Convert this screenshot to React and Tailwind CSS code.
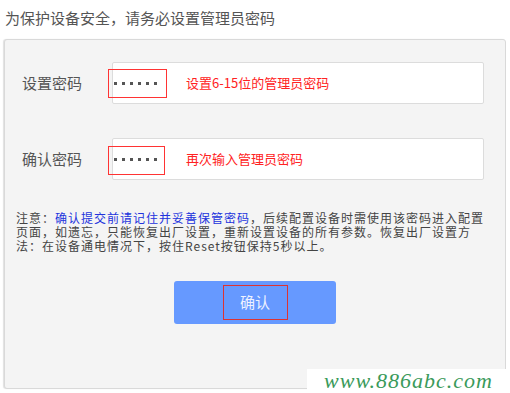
function Dots() {
  return (
    <div className="flex gap-[5px] ml-[1px]">
      {[0, 1, 2, 3, 4, 5].map((i) => (
        <span key={i} className="block w-[3px] h-[3px] bg-[#555]"></span>
      ))}
    </div>
  );
}

export default function App() {
  const font = { fontFamily: '"Noto Sans CJK SC", "Liberation Sans", sans-serif' };
  return (
    <div className="relative w-[510px] h-[393px] bg-white overflow-hidden" style={font}>
      <div className="pl-[5px] pt-[7px] h-[39px] text-[15px] leading-[22px] text-[#555]">为保护设备安全，请务必设置管理员密码</div>
      <div className="ml-[4px] w-[502px] h-[350px] bg-[#f4f4f4] border border-[#d9d9d9] rounded-[3px] shadow-[-1px_0_1px_#e0e0e0]">
        <div className="flex items-center h-[42px] mt-[22px]">
          <div className="w-[107px] pl-[17px] text-[15px] text-[#555]">设置密码</div>
          <div className="relative flex items-center w-[372px] h-[42px] bg-white border border-[#dcdcdc] rounded-[2px]">
            <div className="absolute left-[-5px] top-[6px] w-[59px] h-[29px] border border-[#ff3333]"></div>
            <Dots />
            <span className="ml-[29px] text-[13px] text-[#ff2222]">设置6-15位的管理员密码</span>
          </div>
        </div>
        <div className="flex items-center h-[42px] mt-[34px]">
          <div className="w-[107px] pl-[17px] text-[15px] text-[#555]">确认密码</div>
          <div className="relative flex items-center w-[372px] h-[42px] bg-white border border-[#dcdcdc] rounded-[2px]">
            <div className="absolute left-[-5px] top-[7px] w-[57px] h-[29px] border border-[#ff3333]"></div>
            <Dots />
            <span className="ml-[29px] text-[13px] text-[#ff2222]">再次输入管理员密码</span>
          </div>
        </div>
        <div className="mt-[31px] pl-[11px] text-[12px] tracking-[1px] leading-[14px] text-[#444] whitespace-nowrap">
          注意：<span className="text-[#2233dd]">确认提交前请记住并妥善保管密码</span>，后续配置设备时需使用该密码进入配置<br />
          页面，如遗忘，只能恢复出厂设置，重新设置设备的所有参数。恢复出厂设置方<br />
          法：在设备通电情况下，按住Reset按钮保持5秒以上。
        </div>
        <div className="flex justify-center mt-[28px]">
          <div className="flex items-center justify-center w-[162px] h-[43px] bg-[#6699ff] rounded-[3px]">
            <div className="flex items-center justify-center w-[65px] h-[35px] border border-[#dd3333] text-[15px] text-[#eef2ff]">确认</div>
          </div>
        </div>
      </div>
      <div className="absolute right-0 bottom-0 w-[203px] h-[24px] bg-white flex items-center justify-center">
        <span className="italic text-[22px] leading-[24px] text-[#3a9a5a]" style={{ fontFamily: '"Liberation Serif", serif', letterSpacing: '1px' }}>www.886abc.com</span>
      </div>
    </div>
  );
}
